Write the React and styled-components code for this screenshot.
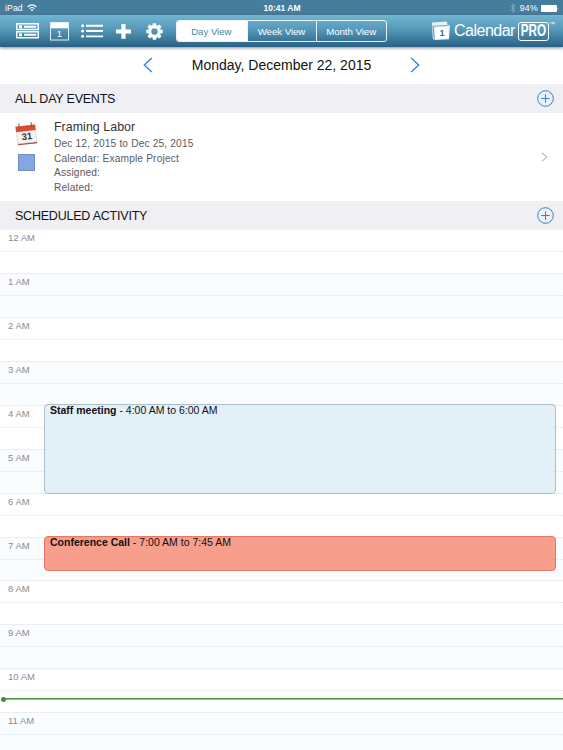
import React from "react";
import styled, { createGlobalStyle, css } from "styled-components";

const HOUR_HEIGHT = 43.9;
const GRID_OFFSET = 0.7;

const hours = [
  "12 AM",
  "1 AM",
  "2 AM",
  "3 AM",
  "4 AM",
  "5 AM",
  "6 AM",
  "7 AM",
  "8 AM",
  "9 AM",
  "10 AM",
  "11 AM",
];

const activities = [
  {
    title: "Staff meeting",
    time: "4:00 AM to 6:00 AM",
    start: 4,
    end: 6,
    tone: "blue",
  },
  {
    title: "Conference Call",
    time: "7:00 AM to 7:45 AM",
    start: 7,
    end: 7.75,
    tone: "red",
  },
];

const WifiIcon = () => (
  <svg width="10" height="8" viewBox="0 0 10 8" fill="none" stroke="#fff">
    <path d="M.6 2.8Q5-1 9.4 2.8M2.4 4.6Q5 2.4 7.6 4.6" strokeWidth="1.2" />
    <path d="M3.5 5.7Q5 4.6 6.5 5.7L5 7.3Z" fill="#fff" stroke="none" />
  </svg>
);

const BluetoothIcon = () => (
  <svg width="6" height="10" viewBox="0 0 6 10" fill="none" stroke="#8fb6cc">
    <path d="M.7 2.7L5.2 7 3 9.2V.8L5.2 3 .7 7.3" strokeWidth=".8" />
  </svg>
);

const BatteryIcon = () => (
  <svg width="18" height="7" viewBox="0 0 18 7" fill="#fff">
    <rect width="16" height="7" rx="1" />
    <path d="M16.6 2.2Q18 3.5 16.6 4.8Z" />
  </svg>
);

const CardsIcon = () => (
  <svg width="23" height="16" viewBox="0 0 23 16">
    <path
      fill="#fff"
      fillRule="evenodd"
      d="M0 0H23V7.3H0ZM1.5 1.6V5.8H21.5V1.6ZM0 8H23V15.5H0ZM1.5 9.5V13.9H21.5V9.5Z"
    />
    <path fill="#fff" d="M3 2.2H6V5.2H3ZM8 2.7H20.2V4.7H8ZM3 10.2H6V13.2H3ZM8 10.7H20.2V12.7H8Z" />
  </svg>
);

const DayIcon = () => (
  <svg width="19" height="19" viewBox="0 0 19 19">
    <path d="M0 0H19V6.3H0Z" fill="#fff" />
    <rect x=".5" y=".5" width="18" height="17.5" fill="none" stroke="#e3f0f6" />
    <text x="9.5" y="15.3" textAnchor="middle" fill="#fff" fontSize="9.5">
      1
    </text>
  </svg>
);

const ListIcon = () => (
  <svg width="22" height="14" viewBox="0 0 22 14" fill="#fff">
    <circle cx="1.6" cy="1.7" r="1.5" />
    <circle cx="1.6" cy="7" r="1.5" />
    <circle cx="1.6" cy="12.3" r="1.5" />
    <path d="M5 .8H22V2.7H5ZM5 6.1H22V8H5ZM5 11.4H22V13.3H5Z" />
  </svg>
);

const PlusIcon = () => (
  <svg width="15" height="15" viewBox="0 0 15 15" fill="#fff">
    <path d="M5.4 0H9.6V5.4H15V9.4H9.6V14.8H5.4V9.4H0V5.4H5.4Z" />
  </svg>
);

const GearIcon = () => (
  <svg width="17" height="17" viewBox="-8.5 -8.5 17 17">
    <circle r="4.8" fill="none" stroke="#fff" strokeWidth="3.2" />
    {[0, 45, 90, 135, 180, 225, 270, 315].map((angle) => (
      <path
        key={angle}
        d="M-2 -5.8L-1.6 -8.3H1.6L2 -5.8Z"
        fill="#fff"
        transform={`rotate(${angle})`}
      />
    ))}
  </svg>
);

const LogoIcon = () => (
  <svg width="20" height="20" viewBox="0 0 20 20">
    <path d="M1 1.5L15.8.6 16.6 4 19 4.6 18 18.3 3.4 19 1.8 17.8Z" fill="#e6f1f6" />
    <path d="M1.6 5.3L16.5 4.5" stroke="#4787a6" strokeWidth=".7" />
    <path d="M4.7 6.3L16.7 5.7 18 17.2 4.3 18.2Z" fill="#fff" />
    <path d="M2.2 5.6L3.4 18.5" stroke="#4787a6" strokeWidth=".8" />
    <text x="11" y="15.3" textAnchor="middle" fill="#26678c" fontSize="8.5" fontWeight="bold">
      1
    </text>
  </svg>
);

const Chevron = ({ flip, small }) => (
  <svg
    width={small ? 7 : 10}
    height={small ? 10 : 16}
    viewBox={small ? "0 0 7 10" : "0 0 10 16"}
    fill="none"
    stroke={small ? "#c3c3c7" : "#2686e0"}
    strokeWidth="1.3"
  >
    {small ? (
      <path d="M1 .8L5.7 5 1 9.2" />
    ) : (
      <path d={flip ? "M8.8 1L1.3 8 8.8 15" : "M1.2 1L8.7 8 1.2 15"} />
    )}
  </svg>
);

const AddIcon = () => (
  <svg width="17" height="17" viewBox="0 0 17 17" fill="none" stroke="#2b84d8">
    <circle cx="8.5" cy="8.5" r="7.8" strokeWidth="1" />
    <path d="M8.5 4.3V12.7M4.3 8.5H12.7" strokeWidth="1" />
  </svg>
);

const EventIcon = () => (
  <svg width="24" height="24" viewBox="0 0 24 24">
    <path d="M2.3 21.7L21.9 19.8 22.3 21.2 3.4 23.3Z" fill="#974a39" />
    <path d="M.6 5.2L20.1 2.8 22 19.8 2.8 22Z" fill="#f5f2ef" stroke="#cfc4be" strokeWidth=".5" />
    <path d="M.5 4.8L20 2.5 20.7 8 1.2 10.2Z" fill="#dc4b2d" />
    <path d="M4 6.8V1.5M16.3 5.2V.3" stroke="#865c54" strokeWidth="1.1" />
    <text
      x="11.8"
      y="17.6"
      textAnchor="middle"
      fontSize="9.5"
      fontWeight="bold"
      fill="#333"
      transform="rotate(-6 11.8 14)"
    >
      31
    </text>
  </svg>
);

const App = () => {
  return (
    <>
      <GlobalStyle />
      <Screen>
        <StatusBar>
          <Device>
            iPad <WifiIcon />
          </Device>
          <Clock>10:41 AM</Clock>
          <Power>
            <BluetoothIcon />
            <span>94%</span>
            <BatteryIcon />
          </Power>
        </StatusBar>

        <Toolbar>
          <Tools>
            <CardsIcon />
            <DayIcon />
            <ListIcon />
            <PlusIcon />
            <GearIcon />
          </Tools>
          <Segments>
            <Segment $active>Day View</Segment>
            <Segment>Week View</Segment>
            <Segment>Month View</Segment>
          </Segments>
          <Brand>
            <LogoIcon />
            <BrandName>Calendar</BrandName>
            <Pro>
              <span>PRO</span>
            </Pro>
            <Trademark>™</Trademark>
          </Brand>
        </Toolbar>

        <DateNav>
          <Chevron flip />
          <DateTitle>Monday, December 22, 2015</DateTitle>
          <Chevron />
        </DateNav>

        <SectionHeader>
          <SectionTitle>ALL DAY EVENTS</SectionTitle>
          <AddIcon />
        </SectionHeader>

        <AllDayEvent>
          <Markers>
            <EventIcon />
            <Swatch />
          </Markers>
          <Details>
            <EventTitle>Framing Labor</EventTitle>
            <Detail>Dec 12, 2015 to Dec 25, 2015</Detail>
            <Detail>Calendar: Example Project</Detail>
            <Detail>Assigned:</Detail>
            <Detail>Related:</Detail>
          </Details>
          <Chevron small />
        </AllDayEvent>

        <SectionHeader>
          <SectionTitle>SCHEDULED ACTIVITY</SectionTitle>
          <AddIcon />
        </SectionHeader>

        <Schedule>
          {hours.map((hour) => (
            <Hour key={hour}>
              <span>{hour}</span>
            </Hour>
          ))}
          {activities.map(({ title, time, start, end, tone }) => (
            <Activity
              key={title}
              $tone={tone}
              style={{
                top: Math.floor(start * HOUR_HEIGHT - GRID_OFFSET),
                height: Math.round((end - start) * HOUR_HEIGHT) + 2,
              }}
            >
              <b>{title}</b> - {time}
            </Activity>
          ))}
          <NowLine />
        </Schedule>
      </Screen>
    </>
  );
};

const GlobalStyle = createGlobalStyle`
  * {
    box-sizing: border-box;
  }

  body {
    margin: 0;
    font-family: "Liberation Sans", Arial, sans-serif;
    color: #111;
    background: #fff;
  }

  svg {
    display: block;
    flex: none;
  }
`;

const Screen = styled.main`
  width: 563px;
  height: 750px;
  overflow: hidden;
  display: flex;
  flex-direction: column;
`;

const StatusBar = styled.header`
  flex: none;
  height: 15px;
  padding: 0 4px 0 5px;
  display: grid;
  grid-template-columns: 1fr auto 1fr;
  align-items: center;
  background: #457d9c;
  color: #fff;
  font-size: 8.7px;
  line-height: 16px;
`;

const Device = styled.div`
  display: flex;
  align-items: center;
  gap: 4px;
  letter-spacing: 0.1px;
`;

const Clock = styled.div`
  font-weight: bold;
  font-size: 8.5px;
`;

const Power = styled.div`
  display: flex;
  align-items: center;
  justify-content: flex-end;
  gap: 4px;

  span {
    letter-spacing: 0.3px;
    margin-right: -1px;
  }
`;

const Toolbar = styled.nav`
  flex: none;
  height: 32px;
  padding: 0 8px 0 16px;
  display: flex;
  align-items: center;
  background: linear-gradient(#73b5d3, #5598b8 45%, #286286);
  box-shadow: 0 1px 3px rgba(60, 60, 70, 0.6);
  color: #fff;
`;

const Tools = styled.div`
  width: 160px;
  display: flex;
  align-items: center;

  svg:nth-child(2) {
    margin-left: 11px;
  }

  svg:nth-child(3) {
    margin-left: 12px;
  }

  svg:nth-child(4) {
    margin-left: 13px;
  }

  svg:nth-child(5) {
    margin-left: 15px;
  }
`;

const Segments = styled.div`
  width: 211px;
  height: 22px;
  display: grid;
  grid-template-columns: repeat(3, 1fr);
  border: 1px solid #e8f3f8;
  border-radius: 3px;
  overflow: hidden;
`;

const Segment = styled.div`
  padding-right: 1px;
  display: grid;
  place-items: center;
  font-size: 9.7px;
  letter-spacing: -0.05px;

  & + & {
    border-left: 1px solid #e8f3f8;
  }

  ${({ $active }) =>
    $active &&
    css`
      background: #fff;
      color: #4687a8;
    `}
`;

const Brand = styled.div`
  margin-left: auto;
  display: flex;
  align-items: center;
`;

const BrandName = styled.span`
  margin-left: 3px;
  width: 61px;
  font-size: 16px;
  letter-spacing: -0.5px;
  line-height: 20px;
`;

const Pro = styled.div`
  width: 31px;
  height: 19px;
  margin-left: 3px;
  display: flex;
  align-items: center;
  justify-content: center;
  border: 1.5px solid #fff;
  border-radius: 3px;
  font-size: 16px;
  font-weight: bold;
  line-height: 16px;

  span {
    flex: none;
    transform: scaleX(0.73);
  }
`;

const Trademark = styled.span`
  align-self: flex-start;
  font-size: 6px;
  line-height: 6px;
  width: 6px;
`;

const DateNav = styled.div`
  flex: none;
  height: 37px;
  padding: 0 143px 2px;
  display: flex;
  align-items: center;
  justify-content: space-between;
`;

const DateTitle = styled.h1`
  margin: 0;
  font-size: 14px;
  font-weight: normal;
  white-space: nowrap;
`;

const SectionHeader = styled.header`
  flex: none;
  height: 29px;
  padding: 0 9px 0 15px;
  display: flex;
  align-items: center;
  justify-content: space-between;
  background: #efeff4;
`;

const SectionTitle = styled.h2`
  margin: 0;
  font-size: 12.5px;
  font-weight: normal;
  letter-spacing: -0.22px;
`;

const AllDayEvent = styled.article`
  flex: none;
  height: 88px;
  padding: 0 15px 1px 0;
  display: flex;
  align-items: center;
`;

const Markers = styled.div`
  width: 54px;
  align-self: flex-start;
  padding: 9px 0 0 15px;
`;

const Swatch = styled.div`
  width: 17px;
  height: 17px;
  margin: 8px 0 0 3px;
  background: #86a6e0;
  border: 1px solid #7190c8;
`;

const Details = styled.div`
  flex: 1;
  align-self: flex-start;
  padding-top: 6px;
`;

const EventTitle = styled.h3`
  margin: 0 0 1px;
  color: #333;
  font-size: 12.4px;
  font-weight: normal;
  line-height: 17px;
  letter-spacing: 0.05px;
`;

const Detail = styled.p`
  margin: 0;
  color: #5b5b5e;
  font-size: 10.2px;
  line-height: 14.7px;
  letter-spacing: 0.15px;
`;

const Schedule = styled.section`
  position: relative;
  flex: 1;
  min-height: 0;
`;

const Hour = styled.div`
  height: ${HOUR_HEIGHT}px;
  padding-left: 8px;
  border-top: 1px solid #e8eef2;
  color: #8b8b90;
  font-size: 9.5px;
  line-height: 16px;
  background: repeating-linear-gradient(
      90deg,
      #e9edf0 0 3px,
      transparent 3px 4px
    )
    0 21px / 100% 1px no-repeat;

  &:nth-child(even) {
    background-color: #f9fdff;
  }

  &:first-child {
    height: ${HOUR_HEIGHT - GRID_OFFSET}px;
    border-top: 0;
    line-height: 15px;
  }
`;

// Activities lie over the hour grid, which stays faintly visible through them
const Activity = styled.article`
  position: absolute;
  left: 44px;
  right: 7px;
  padding-left: 5px;
  border: 1px solid;
  border-radius: 4px;
  color: #111;
  font-size: 10.5px;
  line-height: 10px;

  ${({ $tone }) =>
    $tone === "blue"
      ? css`
          background: rgba(221, 236, 245, 0.8);
          border-color: #a9bfcb;
        `
      : css`
          background: rgba(246, 138, 115, 0.82);
          border-color: #e77762;
        `}
`;

const NowLine = styled.div`
  position: absolute;
  top: 468px;
  left: 3px;
  right: 0;
  height: 2px;
  background: linear-gradient(#4e9b4b 50%, #8dc486 50%);

  &::before {
    content: "";
    position: absolute;
    left: -2px;
    top: -1px;
    width: 5px;
    height: 5px;
    border-radius: 50%;
    background: #438f40;
  }
`;

export default App;
